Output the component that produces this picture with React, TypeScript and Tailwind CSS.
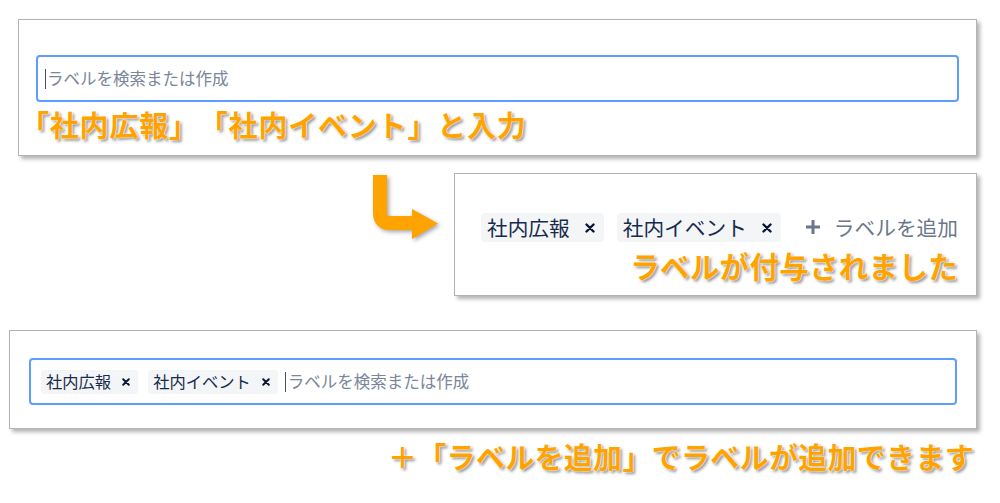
import React from 'react';

const ORANGE_TEXT =
  "font-bold text-[#ffa300] leading-none whitespace-nowrap [text-spacing-trim:space-all] [text-shadow:0_0_1px_#fff,0_0_2px_#fff,2px_2px_3px_rgba(0,0,0,0.45)]";

function XMark({ size }: { size: number }) {
  return (
    <svg width={size} height={size} viewBox="0 0 10 10" className="shrink-0">
      <path d="M1.5 1.5 L8.5 8.5 M8.5 1.5 L1.5 8.5" stroke="#0b1633" strokeWidth="2.4" strokeLinecap="round" />
    </svg>
  );
}

function Chip({ label, big }: { label: string; big?: boolean }) {
  if (big) {
    return (
      <div className="h-[29px] flex items-center bg-[#f4f5f7] rounded-[4px] pl-[6px] pr-[9px] gap-[15px] text-[20.7px] text-[#172b4d]">
        <span className="leading-none">{label}</span>
        <XMark size={10} />
      </div>
    );
  }
  return (
    <div className="h-[24px] flex items-center bg-[#f4f5f7] rounded-[3px] pl-[5px] pr-[8px] gap-[11px] text-[16.3px] text-[#172b4d]">
      <span className="leading-none">{label}</span>
      <XMark size={8} />
    </div>
  );
}

function Caret() {
  return <div className="w-px h-[20px] bg-[#42526e] shrink-0" />;
}

export default function App() {
  return (
    <div className="w-[1000px] h-[503px] bg-white overflow-hidden font-['Noto_Sans_CJK_JP','Noto_Sans',sans-serif]">
      {/* step 1: typing */}
      <div className="pt-[19px] pl-[18px]">
        <div className="w-[959px] h-[137px] bg-white border border-[#b3b3b3] shadow-[3px_3px_4px_rgba(0,0,0,0.3)] pt-[35px] px-[17px]">
          <div className="h-[47px] border-2 border-[#5c9dff] rounded-[4px] flex items-center pl-[7px]">
            <Caret />
            <span className="ml-[1px] text-[16.5px] leading-none text-[#7a869a]">ラベルを検索または作成</span>
          </div>
          <div className={`${ORANGE_TEXT} text-[29px] tracking-[0.8px] mt-[8px] ml-[-16px]`}>「社内広報」「社内イベント」と入力</div>
        </div>
      </div>

      {/* step 2: labels added */}
      <div className="flex mt-[17px]">
        <svg width="72" height="72" viewBox="0 0 72 72" className="ml-[368px] shrink-0 [filter:drop-shadow(2px_2px_2px_rgba(0,0,0,0.35))]">
          <path d="M12 2 V40 Q12 50 22 50 H46" fill="none" stroke="#ffa300" strokeWidth="14" />
          <polygon points="44,36 70,50.5 44,66" fill="#ffa300" />
        </svg>
        <div className="ml-[14px] w-[523px] h-[123px] bg-white border border-[#b3b3b3] shadow-[3px_3px_4px_rgba(0,0,0,0.3)] pt-[39px] pr-[18px] flex flex-col items-end">
          <div className="flex items-center">
            <Chip label="社内広報" big />
            <div className="ml-[13px]">
              <Chip label="社内イベント" big />
            </div>
            <div className="ml-[24px] flex items-center gap-[13px] text-[20.7px] text-[#6b778c]">
              <svg width="16" height="16" viewBox="0 0 16 16">
                <path d="M8 1 V15 M1 8 H15" stroke="#6b778c" strokeWidth="3" />
              </svg>
              <span className="leading-none">ラベルを追加</span>
            </div>
          </div>
          <div className={`${ORANGE_TEXT} text-[29.5px] tracking-[0.3px] mt-[9px]`}>ラベルが付与されました</div>
        </div>
      </div>

      {/* step 3: result inside the field */}
      <div className="mt-[34px] ml-[9px] w-[968px] h-[99px] bg-white border border-[#b3b3b3] shadow-[3px_3px_4px_rgba(0,0,0,0.3)] pt-[27px] px-[19px]">
        <div className="h-[47px] border-2 border-[#5c9dff] rounded-[4px] flex items-center pl-[10px]">
          <Chip label="社内広報" />
          <div className="ml-[10px]">
            <Chip label="社内イベント" />
          </div>
          <div className="ml-[7px]">
            <Caret />
          </div>
          <span className="ml-[2px] text-[16.5px] leading-none text-[#7a869a]">ラベルを検索または作成</span>
        </div>
      </div>

      <div className={`${ORANGE_TEXT} text-[29px] tracking-[0.3px] mt-[13px] ml-[388px]`}>＋「ラベルを追加」でラベルが追加できます</div>
    </div>
  );
}
